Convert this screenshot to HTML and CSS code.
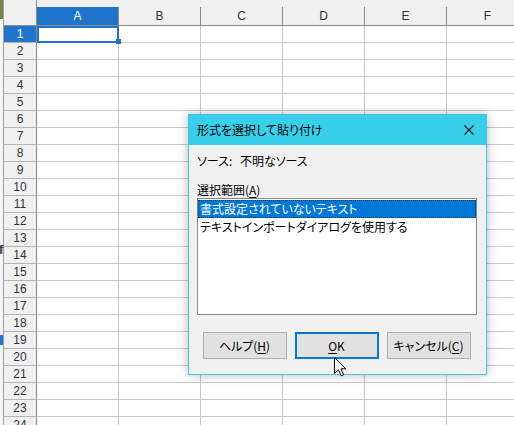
FILE: index.html
```html
<!DOCTYPE html>
<html lang="ja">
<head>
<meta charset="utf-8">
<link rel="stylesheet" href="styles.css">
</head>
<body>
<div class="sheet">
  <div class="head">
    <div class="edge olive"></div>
    <div class="corner"></div>
    <div class="ch selh">A</div><div class="ch">B</div><div class="ch">C</div><div class="ch">D</div><div class="ch">E</div><div class="ch">F</div>
  </div>
  <div class="row"><div class="edge"></div><div class="rh selh">1</div><div class="c sel"></div><div class="c"></div><div class="c"></div><div class="c"></div><div class="c"></div><div class="c"></div></div>
  <div class="row"><div class="edge"></div><div class="rh">2</div><div class="c"></div><div class="c"></div><div class="c"></div><div class="c"></div><div class="c"></div><div class="c"></div></div>
  <div class="row"><div class="edge"></div><div class="rh">3</div><div class="c"></div><div class="c"></div><div class="c"></div><div class="c"></div><div class="c"></div><div class="c"></div></div>
  <div class="row"><div class="edge"></div><div class="rh">4</div><div class="c"></div><div class="c"></div><div class="c"></div><div class="c"></div><div class="c"></div><div class="c"></div></div>
  <div class="row"><div class="edge"></div><div class="rh">5</div><div class="c"></div><div class="c"></div><div class="c"></div><div class="c"></div><div class="c"></div><div class="c"></div></div>
  <div class="row"><div class="edge"></div><div class="rh">6</div><div class="c"></div><div class="c"></div><div class="c"></div><div class="c"></div><div class="c"></div><div class="c"></div></div>
  <div class="row"><div class="edge"></div><div class="rh">7</div><div class="c"></div><div class="c"></div><div class="c"></div><div class="c"></div><div class="c"></div><div class="c"></div></div>
  <div class="row"><div class="edge"></div><div class="rh">8</div><div class="c"></div><div class="c"></div><div class="c"></div><div class="c"></div><div class="c"></div><div class="c"></div></div>
  <div class="row"><div class="edge"></div><div class="rh">9</div><div class="c"></div><div class="c"></div><div class="c"></div><div class="c"></div><div class="c"></div><div class="c"></div></div>
  <div class="row"><div class="edge"></div><div class="rh">10</div><div class="c"></div><div class="c"></div><div class="c"></div><div class="c"></div><div class="c"></div><div class="c"></div></div>
  <div class="row"><div class="edge"></div><div class="rh">11</div><div class="c"></div><div class="c"></div><div class="c"></div><div class="c"></div><div class="c"></div><div class="c"></div></div>
  <div class="row"><div class="edge"></div><div class="rh">12</div><div class="c"></div><div class="c"></div><div class="c"></div><div class="c"></div><div class="c"></div><div class="c"></div></div>
  <div class="row"><div class="edge"></div><div class="rh">13</div><div class="c"></div><div class="c"></div><div class="c"></div><div class="c"></div><div class="c"></div><div class="c"></div></div>
  <div class="row"><div class="edge"></div><div class="rh">14</div><div class="c"></div><div class="c"></div><div class="c"></div><div class="c"></div><div class="c"></div><div class="c"></div></div>
  <div class="row"><div class="edge"></div><div class="rh">15</div><div class="c"></div><div class="c"></div><div class="c"></div><div class="c"></div><div class="c"></div><div class="c"></div></div>
  <div class="row"><div class="edge"></div><div class="rh">16</div><div class="c"></div><div class="c"></div><div class="c"></div><div class="c"></div><div class="c"></div><div class="c"></div></div>
  <div class="row"><div class="edge"></div><div class="rh">17</div><div class="c"></div><div class="c"></div><div class="c"></div><div class="c"></div><div class="c"></div><div class="c"></div></div>
  <div class="row"><div class="edge"></div><div class="rh">18</div><div class="c"></div><div class="c"></div><div class="c"></div><div class="c"></div><div class="c"></div><div class="c"></div></div>
  <div class="row"><div class="edge blue"></div><div class="rh">19</div><div class="c"></div><div class="c"></div><div class="c"></div><div class="c"></div><div class="c"></div><div class="c"></div></div>
  <div class="row"><div class="edge"></div><div class="rh">20</div><div class="c"></div><div class="c"></div><div class="c"></div><div class="c"></div><div class="c"></div><div class="c"></div></div>
  <div class="row"><div class="edge"></div><div class="rh">21</div><div class="c"></div><div class="c"></div><div class="c"></div><div class="c"></div><div class="c"></div><div class="c"></div></div>
  <div class="row"><div class="edge"></div><div class="rh">22</div><div class="c"></div><div class="c"></div><div class="c"></div><div class="c"></div><div class="c"></div><div class="c"></div></div>
  <div class="row"><div class="edge"></div><div class="rh">23</div><div class="c"></div><div class="c"></div><div class="c"></div><div class="c"></div><div class="c"></div><div class="c"></div></div>
  <div class="row"><div class="edge"></div><div class="rh">24</div><div class="c"></div><div class="c"></div><div class="c"></div><div class="c"></div><div class="c"></div><div class="c"></div></div>

  <div class="handle"></div>
  <div class="frag">ff</div>

  <div class="dialog">
    <div class="titlebar">
      <span class="title">形式を選択して貼り付け</span>
      <span class="close"><svg width="10" height="10" viewBox="0 0 10 10"><path d="M0.5 0.5 L9.5 9.5 M9.5 0.5 L0.5 9.5" stroke="#1a1a1a" stroke-width="1.1" fill="none"/></svg></span>
    </div>
    <div class="dbody">
      <div class="source"><span class="srclabel">ソース:</span><span>不明なソース</span></div>
      <div class="sellabel">選択範囲(<u>A</u>)</div>
      <div class="list">
        <div class="item active">書式設定されていないテキスト</div>
        <div class="item">テキストインポートダイアログを使用する</div>
      </div>
      <div class="buttons">
        <div class="btn">ヘルプ(<u>H</u>)</div>
        <div class="btn default"><u>O</u>K</div>
        <div class="btn">キャンセル(<u>C</u>)</div>
      </div>
    </div>
  </div>

  <svg class="cursor" width="13" height="20" viewBox="0 0 13 20"><path d="M0.5 0.5 L0.5 16.5 L4.5 12.8 L7.2 18.8 L9.6 17.8 L7 11.8 L11.8 11.8 Z" fill="#fff" stroke="#000" stroke-width="1" stroke-linejoin="miter"/></svg>
</div>
</body>
</html>
```

FILE: styles.css
```css
html, body {
  margin: 0;
  padding: 0;
}
body {
  width: 514px;
  height: 425px;
  overflow: hidden;
  font-family: "Noto Sans CJK JP", "Liberation Sans", sans-serif;
}
.sheet {
  position: relative;
  width: 514px;
  height: 425px;
  overflow: hidden;
  background: #fff;
}
.head {
  display: flex;
  height: 26px;
  background: #f0f0f0;
}
.row {
  display: flex;
  height: 17px;
}
.edge {
  width: 3px;
  flex: none;
  background: #f4f4f4;
}
.edge.olive {
  background: linear-gradient(#7c8148 0 19px, #f4f4f4 19px);
}
.edge.blue {
  background: linear-gradient(#f4f4f4 0 3px, #1f75cc 3px 13px, #f4f4f4 13px);
}
.corner {
  width: 34px;
  flex: none;
  box-sizing: border-box;
  border-left: 1px solid #a0a0a0;
  border-right: 1px solid #8a8a8a;
  border-bottom: 1px solid #8a8a8a;
}
.ch {
  width: 82px;
  flex: none;
  margin-top: 7px;
  height: 19px;
  box-sizing: border-box;
  border-right: 1px solid #8a8a8a;
  border-bottom: 1px solid #8a8a8a;
  text-align: center;
  font: 12px/18px "Liberation Sans", sans-serif;
  color: #333;
}
.rh {
  width: 34px;
  flex: none;
  box-sizing: border-box;
  border-left: 1px solid #a0a0a0;
  border-right: 1px solid #8a8a8a;
  border-bottom: 1px solid #b4b4b4;
  background: #f0f0f0;
  text-align: center;
  font: 12px/16px "Liberation Sans", sans-serif;
  color: #333;
}
.selh {
  background: #1f75cc;
  color: #fff;
}
.c {
  width: 82px;
  flex: none;
  box-sizing: border-box;
  border-right: 1px solid #c8c8c8;
  border-bottom: 1px solid #c8c8c8;
}
.c.sel {
  outline: 2px solid #1f75cc;
  outline-offset: -2px;
}
.handle {
  position: absolute;
  left: 116px;
  top: 39px;
  width: 5px;
  height: 5px;
  background: #1f75cc;
}
.frag {
  position: absolute;
  left: -1px;
  top: 243px;
  font: 12px/14px "Liberation Sans", sans-serif;
  color: #333;
  letter-spacing: -2px;
}

/* dialog */
.dialog {
  position: absolute;
  left: 188px;
  top: 114px;
  width: 299px;
  height: 261px;
  box-sizing: border-box;
  border: 1px solid #40c8e2;
  background: #f0f0f0;
  box-shadow: 0 0 10px rgba(0, 0, 0, 0.28);
  font-size: 12px;
  font-feature-settings: "palt";
  color: #000;
}
.titlebar {
  height: 30px;
  background: #38cfea;
  display: flex;
  align-items: center;
  justify-content: space-between;
  padding-left: 8px;
}
.title {
  line-height: 16px;
}
.close {
  width: 34px;
  height: 30px;
  display: flex;
  align-items: center;
  justify-content: center;
}
.dbody {
  padding: 8px 9px 0 8px;
}
.source {
  display: flex;
  line-height: 16px;
}
.srclabel {
  flex: none;
  width: 43px;
  margin-right: 0;
}
.srcvalue {
  padding-left: 0;
}
.sellabel {
  margin-top: 13px;
  line-height: 16px;
}
.list {
  margin-top: 0;
  height: 117px;
  box-sizing: border-box;
  border: 1px solid #828790;
  background: #fff;
  padding-top: 1px;
}
.item {
  height: 18px;
  line-height: 18px;
  padding-left: 2px;
  box-sizing: border-box;
  white-space: nowrap;
}
.item.active {
  background: #0078d7;
  color: #fff;
  border: 1px dotted #1a3a5a;
  line-height: 16px;
  padding-left: 1px;
}
.buttons {
  margin-top: 17px;
  display: flex;
  justify-content: center;
  gap: 8px;
  padding-right: 1px;
}
.btn {
  width: 84px;
  height: 27px;
  box-sizing: border-box;
  border: 1px solid #adadad;
  background: #e1e1e1;
  display: flex;
  align-items: center;
  justify-content: center;
  line-height: 16px;
}
.btn.default {
  border: 2px solid #0078d7;
}
.btn u {
  text-decoration-thickness: 1px;
  text-underline-offset: 2px;
}
.sellabel u {
  text-underline-offset: 2px;
}
.cursor {
  position: absolute;
  left: 334px;
  top: 357px;
}
```
